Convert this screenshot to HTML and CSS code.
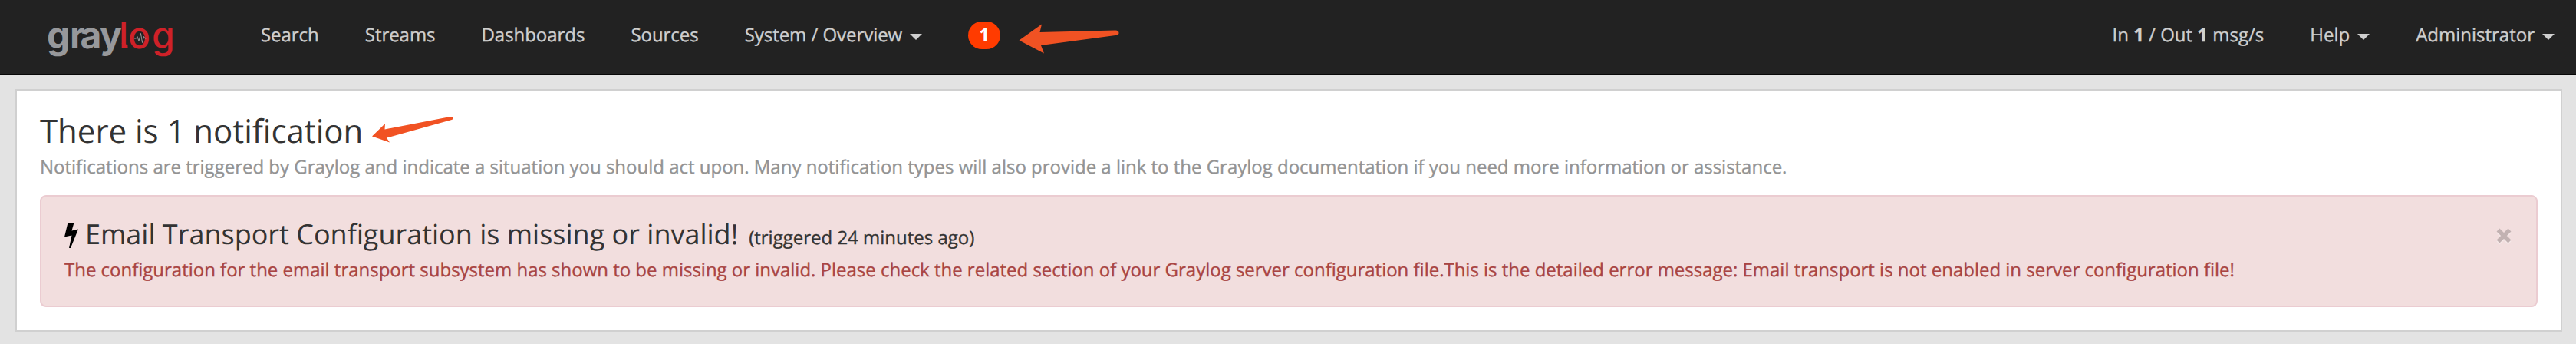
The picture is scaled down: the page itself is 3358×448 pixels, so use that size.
FILE: index.html
```html
<!DOCTYPE html>
<html lang="en">
<head>
<meta charset="utf-8">
<title>Graylog - Notifications</title>
<link rel="stylesheet" href="styles.css">
</head>
<body>
<nav class="navbar">
  <a class="brand">
    <svg class="logo" width="168" height="54" viewBox="0 0 168 54" role="img" aria-label="graylog">
      <text class="logo-gray" x="-1 29 42.500 68" y="37.500">gray<tspan class="logo-red" x="93 105 136">log</tspan></text>
      <path class="logo-hook" d="M99 31Q99 35.500 104.500 35.200"/>
      <path class="logo-pulse" d="M113 25h2.500l1.500-2.500 2 6 2.500-10 2 12 2-8 1.500 2.500h1.500"/>
    </svg>
  </a>
  <ul class="nav nav-left">
    <li class="nav-item">Search</li>
    <li class="nav-item">Streams</li>
    <li class="nav-item">Dashboards</li>
    <li class="nav-item">Sources</li>
    <li class="nav-item">System / Overview<span class="caret"></span></li>
    <li class="nav-badge"><span class="badge">1</span></li>
  </ul>
  <ul class="nav nav-right">
    <li class="nav-item">In <b>1</b> / Out <b>1</b> msg/s</li>
    <li class="nav-item">Help<span class="caret"></span></li>
    <li class="nav-item">Administrator<span class="caret"></span></li>
  </ul>
</nav>
<main class="content">
  <h1 class="title">There is 1 notification</h1>
  <p class="description">Notifications are triggered by Graylog and indicate a situation you should act upon. Many notification types will also provide a link to the Graylog documentation if you need more information or assistance.</p>
  <section class="alert">
    <div class="alert-body">
      <h2 class="alert-title">
        <svg class="bolt" width="18" height="34" viewBox="0 0 18 34"><path d="M4.500 0h8L9.500 10.500L18 8.500L8 33H6L9.500 16.500L0 18.500z"/></svg>
        <span class="alert-heading">Email Transport Configuration is missing or invalid!</span>
        <small class="triggered">(triggered 24 minutes ago)</small>
      </h2>
      <p class="alert-text">The configuration for the email transport subsystem has shown to be missing or invalid. Please check the related section of your Graylog server configuration file.This is the detailed error message: Email transport is not enabled in server configuration file!</p>
    </div>
    <svg class="close" width="20" height="20" viewBox="0 0 20 20"><path d="M2.500 2.500l15 15M17.500 2.500l-15 15"/></svg>
  </section>
</main>
<svg class="arrow arrow-badge" width="160" height="60" viewBox="0 0 160 60"><path d="M18.500 32.500L48 11.500L45.500 22L144 19.500Q148.500 19.500 148.500 23Q148.500 25.500 144 26L47 39L51 49.500z"/></svg>
<svg class="arrow arrow-title" width="140" height="60" viewBox="0 0 140 60"><path d="M15 37.500L32 21L31.500 28.500L117 12Q121 11.500 121 14Q121 15.500 117 16.500L34 39.500L38 45.500z"/></svg>
</body>
</html>
```

FILE: styles.css
```css
* { box-sizing: border-box; }

body {
  margin: 0;
  height: 448px;
  background: #e3e3e3;
  color: #333;
  font: 24px/34px "Open Sans", sans-serif;
  text-rendering: geometricPrecision;
  overflow: hidden;
}

.navbar {
  display: flex;
  height: 98px;
  background: #222;
  border-bottom: 2px solid #080808;
  color: #cfcfcf;
}

.brand {
  width: 310px;
  padding: 25px 0 0 62px;
}

.logo { display: block; overflow: visible; }
.logo text { font-family: Inter, sans-serif; font-size: 48px; }
.logo-gray { fill: #97989b; font-weight: 700; }
.logo-red { fill: #cf2128; font-weight: 500; }
.logo-hook { fill: none; stroke: #cf2128; stroke-width: 4.5; }
.logo-pulse { fill: none; stroke: #97989b; stroke-width: 1; }

.nav {
  display: flex;
  margin: 0;
  padding: 0;
  list-style: none;
}

.nav-left { letter-spacing: -0.04px; }
.nav-right { margin-left: auto; }
.nav-item { padding: 29px 30px 0; white-space: nowrap; }
.nav-right .nav-item:last-child { padding-right: 28px; }

.nav-item,
.description,
.alert-text,
.triggered { -webkit-text-stroke: 0.35px currentColor; }

.caret {
  display: inline-block;
  margin-left: 10px;
  border: 8px solid transparent;
  border-top-color: currentColor;
  border-bottom: 0;
  vertical-align: middle;
}

.nav-badge { padding: 28px 30px 0; }

.badge {
  display: block;
  width: 42px;
  height: 36px;
  border-radius: 20px;
  background: #ff3b00;
  color: #fff;
  font-weight: 700;
  line-height: 36px;
  text-align: center;
}

.content {
  height: 316px;
  margin: 18px 18px 0 20px;
  padding: 30px 30px 0;
  border: 2px solid #d0d0d0;
  background: #fff;
}

.title {
  margin: 0;
  font-size: 42px;
  font-weight: 400;
  letter-spacing: -0.03px;
  line-height: 46px;
}

.description {
  margin: 7px 0 19px;
  color: #939393;
  letter-spacing: -0.009px;
  white-space: nowrap;
}

.alert {
  display: flex;
  justify-content: space-between;
  height: 146px;
  padding: 29px 30px;
  border: 2px solid #ebccd1;
  border-radius: 8px;
  background: #f2dede;
  color: #a94442;
}

.alert-title {
  display: flex;
  align-items: baseline;
  margin: 0;
  color: #333;
  font-size: 36px;
  font-weight: 400;
  line-height: 40px;
}

.bolt { align-self: flex-start; margin: 5px 9px 0 0; fill: #000; }
.triggered { margin-left: 14px; font-size: 24px; }
.alert-text { margin: 5px 0 0; letter-spacing: -0.012px; white-space: nowrap; }

.close {
  margin: 12px 2px 0 0;
  fill: none;
  stroke: #c2b2b2;
  stroke-width: 5.5;
  filter: drop-shadow(0 2px 0 #f6e9e9);
}

/* Callout arrows laid over the page */
.arrow { position: absolute; fill: #f15223; }
.arrow-badge { left: 1310px; top: 20px; }
.arrow-title { left: 470px; top: 140px; }
```
